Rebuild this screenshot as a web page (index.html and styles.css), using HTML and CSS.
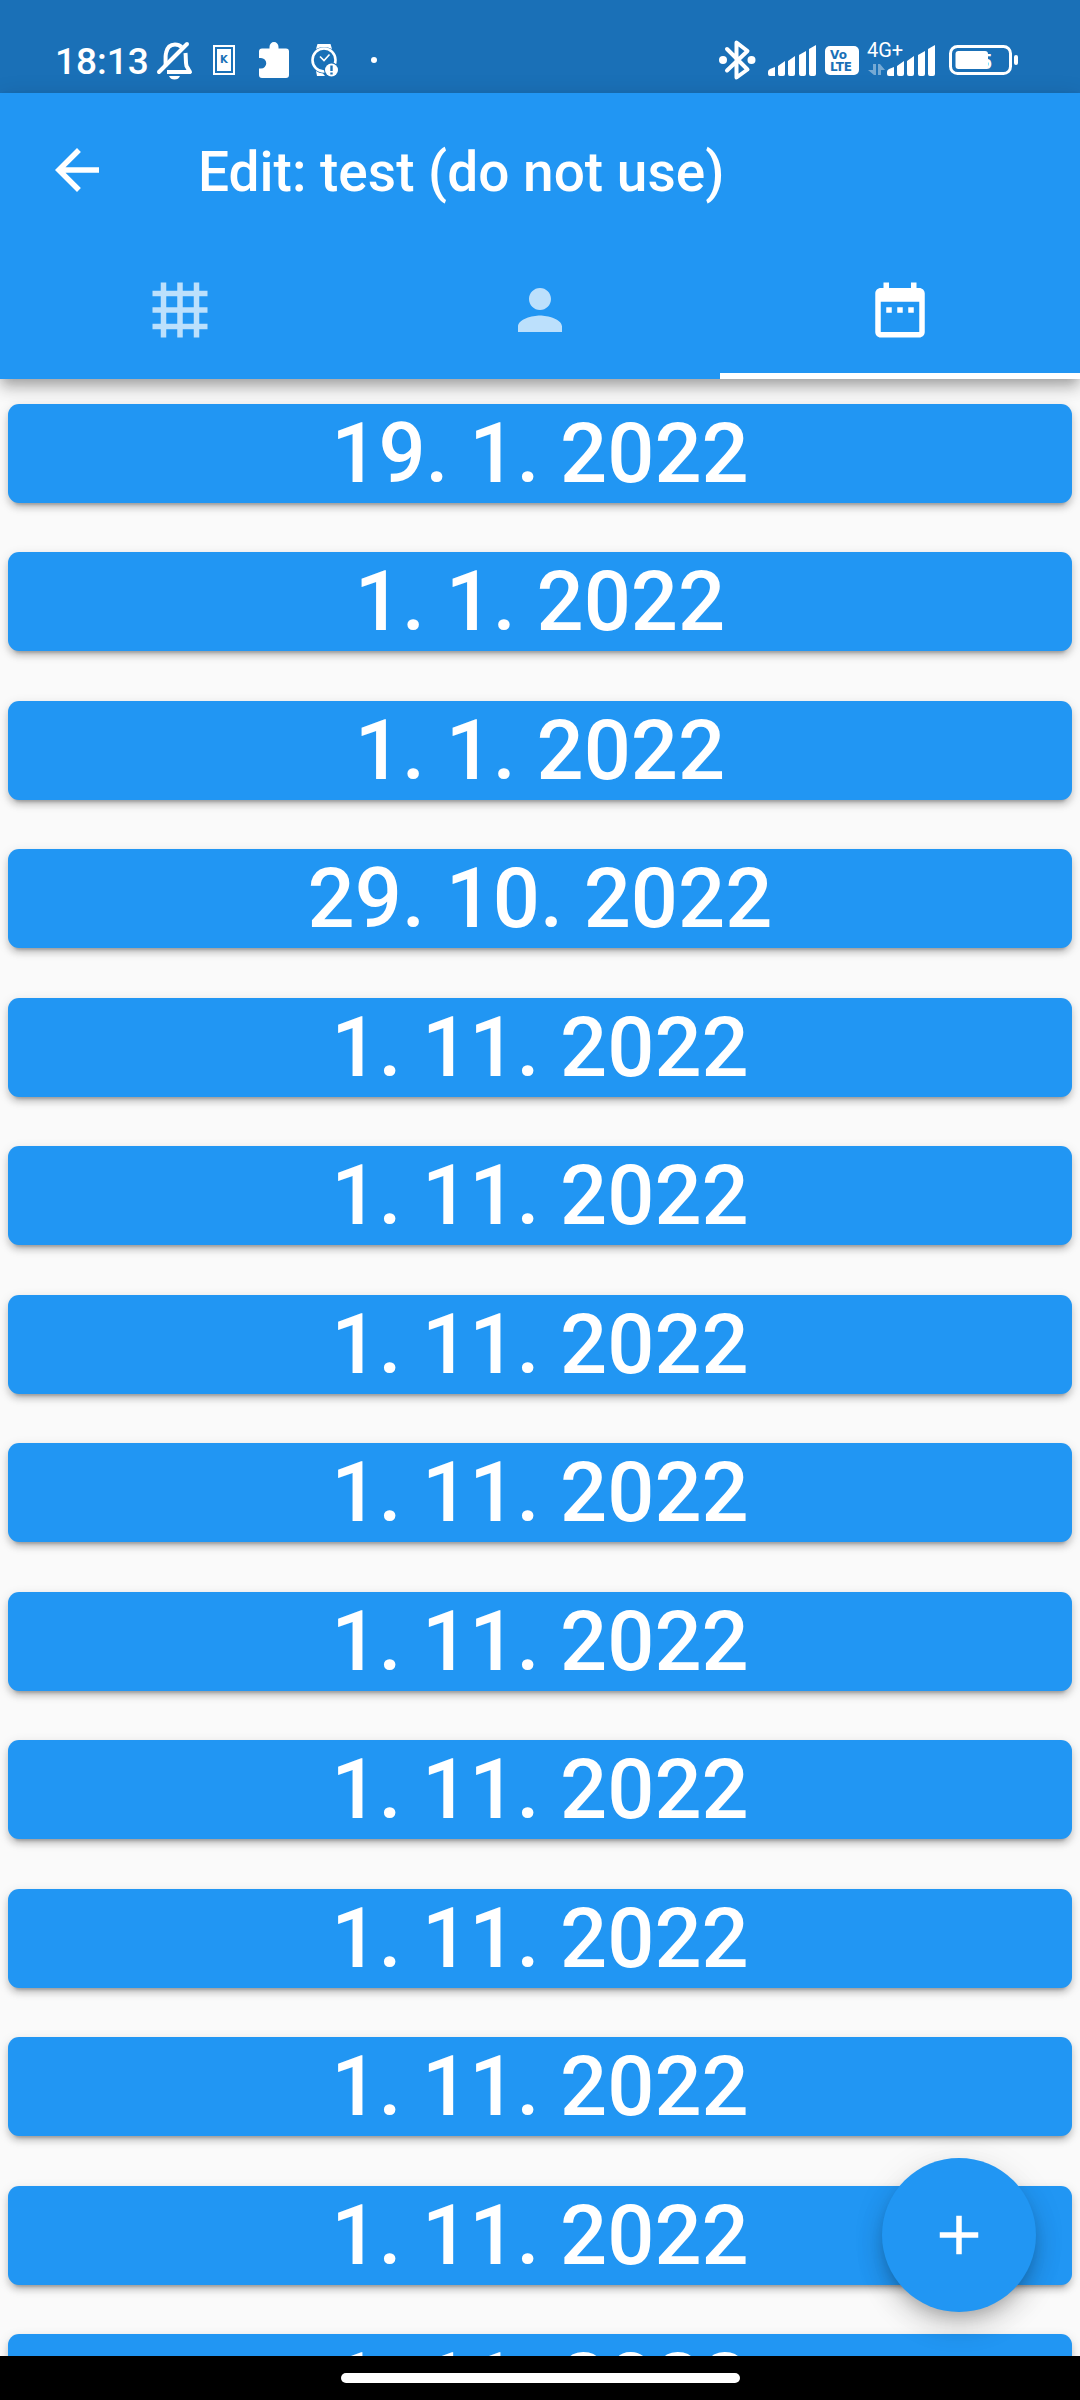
FILE: index.html
```html
<!DOCTYPE html>
<html lang="en">
<head>
<meta charset="utf-8">
<meta name="viewport" content="width=device-width, initial-scale=1">
<title>Edit: test (do not use)</title>
<link rel="stylesheet" href="styles.css">
</head>
<body>
<svg class="defs" aria-hidden="true">
  <symbol id="signal" viewBox="0 0 50 40">
    <path d="M1 34v-2q0-2 2-3l5-2v9H3q-2 0-2-2zM11 34v-8l7-5v13q0 2-2 2h-3q-2 0-2-2zM21 34V21l7-5v18q0 2-2 2h-3q-2 0-2-2zM32 34V15l7-4v23q0 2-2 2h-3q-2 0-2-2zM42 34V9l7-4v29q0 2-2 2h-3q-2 0-2-2z"/>
  </symbol>
</svg>

<div class="status-bar">
  <div class="status-left">
    <time class="clock">18:13</time>
    <svg class="notice" viewBox="0 0 50 40" aria-label="Silent">
      <g fill="none" stroke="#fff" stroke-width="4" stroke-linecap="round" stroke-linejoin="round">
        <path d="M9 32 37 4"/>
        <path stroke-linecap="butt" d="M15.5 26C16 22 15 17 16 13c1-5 4-8.500 9-8.500 3 0 5 1 6.500 2.500M35.500 13c.5 4 0 9 1 13l3.500 6H17"/>
      </g>
      <path fill="#fff" d="M19 36h11q-1.500 3.500-5.500 3.500T19 36z"/>
    </svg>
    <svg class="notice" viewBox="0 0 50 40" aria-label="K">
      <path fill="none" stroke="#fff" stroke-width="2" d="M14 6h20v28H14z"/>
      <path fill="#fff" d="M17 9h14v22H17z"/>
      <text class="badge-k" x="20" y="23">K</text>
    </svg>
    <svg class="notice" viewBox="0 0 50 40" aria-label="Extension">
      <path fill="#fff" d="M12 8.500h7.500V7a4.500 5 0 0 1 9 0v1.500H36q3 0 3 3V35q0 3-3 3H12q-3 0-3-3v-6.500h2a5 5 0 0 0 0-10.500H9v-6.500q0-3 3-3z"/>
    </svg>
    <svg class="notice" viewBox="0 0 50 40" aria-label="Watch">
      <path fill="#fff" d="M17.500 4h13L32 9q-8-4-16 0zM16 31q3 2 7 2.500l2 2.500h-8z"/>
      <circle cx="24" cy="20" r="11.500" fill="none" stroke="#fff" stroke-width="2.600"/>
      <path fill="none" stroke="#fff" stroke-width="1.600" d="M20 16.500l4 4 5.500-6"/>
      <circle cx="31.500" cy="30" r="7.500" fill="#1a70b7"/>
      <circle cx="31.500" cy="30" r="6.500" fill="#fff"/>
      <path fill="#1a70b7" d="M30.300 25.500h2.400v5.500h-2.400zM30.300 32.500h2.400v2h-2.400z"/>
    </svg>
    <svg class="notice" viewBox="0 0 50 40" aria-label="More notifications"><circle cx="24" cy="20" r="3" fill="#fff"/></svg>
  </div>
  <div class="status-right">
    <svg width="42" height="40" viewBox="0 0 42 40" aria-label="Bluetooth">
      <path fill="none" stroke="#fff" stroke-width="4" stroke-linejoin="round" stroke-linecap="round" d="M10 9l20.500 20.500L19.500 37.500v-35L30.500 11 10 30.500"/>
      <circle cx="6" cy="20" r="4" fill="#fff"/><circle cx="34.500" cy="20" r="4" fill="#fff"/>
    </svg>
    <svg width="50" height="40" viewBox="0 0 50 40" fill="#fff" aria-label="Signal"><use href="#signal" width="50" height="40"/></svg>
    <svg width="34" height="40" viewBox="0 0 34 40" aria-label="VoLTE">
      <rect y="6" width="34" height="29" rx="5" fill="#fff"/>
      <text class="volte" x="5" y="19">Vo</text>
      <text class="volte" x="5" y="31">LTE</text>
    </svg>
    <svg width="74" height="40" viewBox="0 0 74 40" fill="#fff" aria-label="4G+ signal">
      <text class="network" x="0" y="17">4G+</text>
      <path opacity=".4" d="M6 24h3v11H7l-6-5h5zM11 24h2l5 6h-4v5h-3z"/>
      <use href="#signal" x="19" width="50" height="40"/>
    </svg>
    <svg width="69" height="40" viewBox="0 0 69 40" aria-label="Battery">
      <rect x="1.500" y="6.500" width="60" height="27" rx="7" fill="none" stroke="#fff" stroke-width="3"/>
      <rect x="6.500" y="11" width="32.500" height="18" rx="3" fill="#fff"/>
      <text class="battery-level" x="20" y="29">65</text>
      <rect x="65" y="15" width="4" height="10" rx="2" fill="#fff"/>
    </svg>
  </div>
</div>

<header class="app-bar">
  <div class="toolbar">
    <button class="back" type="button" aria-label="Back">
      <svg class="icon" viewBox="0 0 24 24"><path d="M20 11H7.830l5.590-5.590L12 4l-8 8 8 8 1.410-1.410L7.830 13H20v-2z"/></svg>
    </button>
    <h1 class="title">Edit: test (do not use)</h1>
  </div>
  <div class="tabs" role="tablist">
    <button class="tab" type="button" role="tab" aria-selected="false" aria-label="Grid">
      <svg class="icon" viewBox="0 0 24 24"><path d="M5 2h2v3h4V2h2v3h4V2h2v3h3v2h-3v4h3v2h-3v4h3v2h-3v3h-2v-3h-4v3h-2v-3H7v3H5v-3H2v-2h3v-4H2v-2h3V7H2V5h3zM7 7v4h4V7zM13 7v4h4V7zM7 13v4h4v-4zM13 13v4h4v-4z" fill-rule="evenodd"/></svg>
    </button>
    <button class="tab" type="button" role="tab" aria-selected="false" aria-label="Person">
      <svg class="icon" viewBox="0 0 24 24"><path d="M12 12c2.210 0 4-1.790 4-4s-1.790-4-4-4-4 1.790-4 4 1.790 4 4 4zm0 2c-2.670 0-8 1.340-8 4v2h16v-2c0-2.660-5.330-4-8-4z"/></svg>
    </button>
    <button class="tab" type="button" role="tab" aria-selected="true" aria-label="Dates">
      <svg class="icon" viewBox="0 0 24 24"><path d="M9 11H7v2h2v-2zm4 0h-2v2h2v-2zm4 0h-2v2h2v-2zm2-7h-1V2h-2v2H8V2H6v2H5c-1.110 0-1.990.9-1.990 2L3 20c0 1.100.89 2 2 2h14c1.100 0 2-.9 2-2V6c0-1.100-.9-2-2-2zm0 16H5V9h14v11z"/></svg>
    </button>
  </div>
</header>

<main class="content">
  <ul class="dates">
    <li><button class="date" type="button">19. 1. 2022</button></li>
    <li><button class="date" type="button">1. 1. 2022</button></li>
    <li><button class="date" type="button">1. 1. 2022</button></li>
    <li><button class="date" type="button">29. 10. 2022</button></li>
    <li><button class="date" type="button">1. 11. 2022</button></li>
    <li><button class="date" type="button">1. 11. 2022</button></li>
    <li><button class="date" type="button">1. 11. 2022</button></li>
    <li><button class="date" type="button">1. 11. 2022</button></li>
    <li><button class="date" type="button">1. 11. 2022</button></li>
    <li><button class="date" type="button">1. 11. 2022</button></li>
    <li><button class="date" type="button">1. 11. 2022</button></li>
    <li><button class="date" type="button">1. 11. 2022</button></li>
    <li><button class="date" type="button">1. 11. 2022</button></li>
    <li><button class="date" type="button">1. 11. 2022</button></li>
  </ul>
  <button class="fab" type="button" aria-label="Add date">
    <svg class="icon" viewBox="0 0 24 24"><path d="M19 13h-6v6h-2v-6H5v-2h6V5h2v6h6v2z"/></svg>
  </button>
</main>

<footer class="nav-bar"><div class="nav-handle"></div></footer>
</body>
</html>
```

FILE: styles.css
```css
* {
  box-sizing: border-box;
}

body {
  margin: 0;
  height: 100vh;
  display: flex;
  flex-direction: column;
  background: #fafafa;
  color: #fff;
  font-family: Roboto, sans-serif;
  font-weight: 500;
}

button {
  margin: 0;
  padding: 0;
  border: 0;
  background: none;
  color: inherit;
  font: inherit;
}

svg {
  display: block;
  overflow: visible;
}

.defs {
  position: absolute;
  width: 0;
  height: 0;
}

.icon {
  width: 66px;
  height: 66px;
  fill: currentColor;
}

/* System status bar */
.status-bar {
  flex: none;
  height: 93px;
  padding: 40px 62px 13px 55px;
  display: flex;
  justify-content: space-between;
  background: #1a70b7;
}

.status-left,
.status-right {
  display: flex;
}

.status-right {
  gap: 8px;
}

.clock {
  width: 95px;
  font-size: 37px;
  line-height: 44px;
}

.notice {
  width: 50px;
  height: 40px;
}

.badge-k {
  font: 700 10px "DejaVu Sans", sans-serif;
  fill: #1a70b7;
}

.volte {
  font: 700 12px "DejaVu Sans", sans-serif;
  fill: #1a70b7;
}

.network {
  font-size: 20px;
  font-weight: 400;
}

.battery-level {
  font-size: 20px;
  font-weight: 700;
  fill: #fff;
}

/* App bar */
.app-bar {
  flex: none;
  position: relative;
  z-index: 1;
  background: #2196f3;
  box-shadow: 0 6px 11px -3px rgba(0, 0, 0, .2), 0 11px 14px rgba(0, 0, 0, .14), 0 3px 22px rgba(0, 0, 0, .12);
}

.toolbar {
  height: 154px;
  padding: 0 44px;
  display: flex;
  align-items: center;
  gap: 88px;
}

.title {
  margin: 0;
  padding-top: 4px;
  font-size: 55px;
  font-weight: 500;
  line-height: 64px;
}

.tabs {
  display: grid;
  grid-template-columns: repeat(3, 1fr);
}

.tab {
  height: 132px;
  border-bottom: 6px solid transparent;
  display: flex;
  align-items: center;
  justify-content: center;
  color: rgba(255, 255, 255, .7);
}

.tab[aria-selected="true"] {
  border-bottom-color: #fff;
  color: #fff;
}

/* List of dates */
.content {
  flex: 1;
  min-height: 0;
  position: relative;
  overflow: hidden;
}

.dates {
  margin: 0;
  padding: 25px 8px;
  display: flex;
  flex-direction: column;
  gap: 49px;
  list-style: none;
}

.dates li:nth-child(even) {
  padding-bottom: 1px;
}

.date {
  display: block;
  width: 100%;
  height: 99px;
  border-radius: 11px;
  background: #2196f3;
  box-shadow: 0 8px 3px -6px rgba(0, 0, 0, .2), 0 5px 6px rgba(0, 0, 0, .14), 0 3px 12px rgba(0, 0, 0, .12);
  font-size: 83px;
  line-height: 99px;
  text-align: center;
}

.fab {
  position: absolute;
  right: 44px;
  bottom: 44px;
  width: 154px;
  height: 154px;
  border-radius: 50%;
  display: flex;
  align-items: center;
  justify-content: center;
  background: #2196f3;
  box-shadow: 0 8px 14px -3px rgba(0, 0, 0, .18), 0 16px 28px rgba(0, 0, 0, .14), 0 3px 36px rgba(0, 0, 0, .07);
}

/* System gesture bar */
.nav-bar {
  flex: none;
  height: 44px;
  display: flex;
  align-items: center;
  justify-content: center;
  background: #000;
}

.nav-handle {
  width: 399px;
  height: 10px;
  border-radius: 5px;
  background: #fff;
}
```
